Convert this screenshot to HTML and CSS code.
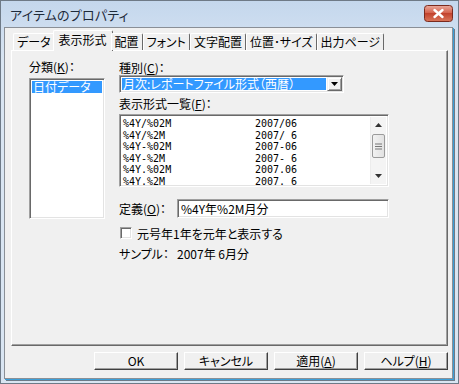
FILE: index.html
```html
<!DOCTYPE html>
<html lang="ja">
<head>
  <meta charset="UTF-8">
  <title>アイテムのプロパティ</title>
  <link rel="stylesheet" href="styles.css">
</head>
<body>
  <div class="window">
    <div class="titlebar">
      <span class="title">アイテムのプロパティ</span>
      <span class="close-btn">
        <svg width="29" height="17" viewBox="0 0 29 17">
          <defs>
            <linearGradient id="cg" x1="0" y1="0" x2="0" y2="1">
              <stop offset="0" stop-color="#eaaa9d"/>
              <stop offset="0.45" stop-color="#d5644f"/>
              <stop offset="0.5" stop-color="#c2432e"/>
              <stop offset="1" stop-color="#da775b"/>
            </linearGradient>
          </defs>
          <rect x="0.5" y="0.5" width="28" height="16" rx="3" fill="url(#cg)" stroke="#7a2a1e"/>
          <path d="M10.5 5 L18.5 12 M18.5 5 L10.5 12" stroke="#fff" stroke-width="2.4" stroke-linecap="round"/>
        </svg>
      </span>
    </div>
    <div class="client">
      <div class="tabs">
        <div class="tab">データ</div>
        <div class="tab active">表示形式</div>
        <div class="tab">配置</div>
        <div class="tab">フォント</div>
        <div class="tab">文字配置</div>
        <div class="tab">位置･サイズ</div>
        <div class="tab">出力ページ</div>
      </div>
      <div class="panel">
        <div class="col-left">
          <div class="label">分類(<u>K</u>)：</div>
          <div class="listbox category">
            <div class="item selected">日付データ</div>
          </div>
        </div>
        <div class="col-right">
          <div class="label">種別(<u>C</u>)：</div>
          <div class="combo">
            <div class="combo-value"><span>月次:レポートファイル形式（西暦）</span></div>
            <div class="combo-btn">
              <svg width="7" height="4" viewBox="0 0 7 4"><path d="M0 0 H7 L3.5 4 Z" fill="#000"/></svg>
            </div>
          </div>
          <div class="label list-label">表示形式一覧(<u>F</u>)：</div>
          <div class="listbox formats">
            <div class="rows">
              <div class="row"><span class="fmt">%4Y/%02M</span><span>2007/06</span></div>
              <div class="row"><span class="fmt">%4Y/%2M</span><span>2007/ 6</span></div>
              <div class="row"><span class="fmt">%4Y-%02M</span><span>2007-06</span></div>
              <div class="row"><span class="fmt">%4Y-%2M</span><span>2007- 6</span></div>
              <div class="row"><span class="fmt">%4Y.%02M</span><span>2007.06</span></div>
              <div class="row"><span class="fmt">%4Y.%2M</span><span>2007. 6</span></div>
            </div>
            <div class="scrollbar">
              <div class="arrow">
                <svg width="7" height="4" viewBox="0 0 7 4"><path d="M0 4 H7 L3.5 0 Z" fill="#333"/></svg>
              </div>
              <div class="track">
                <div class="thumb">
                  <svg width="7" height="7" viewBox="0 0 7 7"><path d="M0 1 H7 M0 3.5 H7 M0 6 H7" stroke="#777" stroke-width="1"/></svg>
                </div>
              </div>
              <div class="arrow">
                <svg width="7" height="4" viewBox="0 0 7 4"><path d="M0 0 H7 L3.5 4 Z" fill="#333"/></svg>
              </div>
            </div>
          </div>
          <div class="def-row">
            <span class="def-label">定義(<u>O</u>)：</span>
            <div class="textbox">%4Y年%2M月分</div>
          </div>
          <div class="check-row">
            <span class="checkbox"></span>
            <span>元号年1年を元年と表示する</span>
          </div>
          <div class="sample-row">
            <span class="def-label">サンプル：</span>
            <span>2007年 6月分</span>
          </div>
        </div>
      </div>
      <div class="buttons">
        <button class="btn">OK</button>
        <button class="btn">キャンセル</button>
        <button class="btn">適用(<u>A</u>)</button>
        <button class="btn">ヘルプ(<u>H</u>)</button>
      </div>
    </div>
  </div>
</body>
</html>
```

FILE: styles.css
```css
* {
  box-sizing: border-box;
}
body {
  margin: 0;
  padding: 0;
  background: #fff;
  font-family: "Noto Sans CJK JP", "Liberation Sans", sans-serif;
  font-size: 12px;
  font-feature-settings: "palt";
  color: #000;
}
u {
  text-decoration: underline;
  text-underline-offset: 1px;
}
.window {
  width: 459px;
  height: 384px;
  border: 1px solid #6e7a87;
  background: linear-gradient(#c4d7ed, #d9e5f2 60px, #d9e5f2);
  display: flex;
  flex-direction: column;
}
.titlebar {
  height: 26px;
  display: flex;
  align-items: center;
  justify-content: space-between;
  padding: 0 5px 0 9px;
}
.title {
  font-size: 13px;
  color: #1e2a3a;
  letter-spacing: 0.2px;
}
.close-btn {
  display: flex;
  margin-top: -2px;
}
.client {
  flex: 1;
  margin: 0 5px 4px 3px;
  background: #f0f0f0;
  border: 1px solid #8a8f96;
  box-shadow: 1px 1px 0 #3b9fd9, 2px 2px 0 #6e7a87;
  display: flex;
  flex-direction: column;
}
.tabs {
  display: flex;
  align-items: flex-end;
  height: 21px;
  margin: 1px 0 0 8px;
  position: relative;
  z-index: 1;
}
.tab {
  height: 17px;
  line-height: 15px;
  padding: 0 3px;
  border-top: 1px solid #fff;
  border-left: 1px solid #fff;
  border-right: 1px solid #696969;
  border-radius: 2px 2px 0 0;
  white-space: nowrap;
  background: #f0f0f0;
}
.tab.active {
  height: 21px;
  line-height: 18px;
  margin: 0 -2px -1px -2px;
  padding: 0 5px;
}
.panel {
  margin: 0 4px 0 6px;
  height: 296px;
  border-top: 1px solid #fff;
  border-left: 1px solid #fff;
  border-right: 1px solid #696969;
  border-bottom: 1px solid #696969;
  box-shadow: inset -1px -1px 0 #a0a0a0;
  display: flex;
  gap: 14px;
  padding: 9px 0 0 17px;
}
.label {
  height: 14px;
  line-height: 14px;
  white-space: nowrap;
}
.col-left {
  width: 76px;
}
.listbox {
  background: #fff;
  border-top: 1px solid #a0a0a0;
  border-left: 1px solid #a0a0a0;
  border-right: 1px solid #fff;
  border-bottom: 1px solid #fff;
  box-shadow: inset 1px 1px 0 #696969, inset -1px -1px 0 #e3e3e3;
}
.category {
  margin-top: 4px;
  height: 141px;
  padding: 2px;
}
.item {
  height: 12px;
  line-height: 12px;
  padding-left: 1px;
}
.item.selected {
  background: #3399ff;
  color: #fff;
}
.col-right {
  width: 270px;
}
.col-right > .label:first-child {
  margin-top: 1px;
}
.combo {
  width: 225px;
  height: 18px;
  margin-top: 0;
  display: flex;
  padding: 2px;
  background: #fff;
  border-top: 1px solid #a0a0a0;
  border-left: 1px solid #a0a0a0;
  border-right: 1px solid #fff;
  border-bottom: 1px solid #fff;
  box-shadow: inset 1px 1px 0 #696969, inset -1px -1px 0 #e3e3e3;
}
.combo-value {
  flex: 1;
  padding-right: 1px;
}
.combo-value span {
  display: block;
  height: 12px;
  line-height: 12px;
  background: #3399ff;
  color: #fff;
  padding-left: 1px;
  white-space: nowrap;
}
.combo-btn {
  width: 15px;
  margin: -1px -1px -1px 0;
  background: #f0f0f0;
  border-top: 1px solid #f0f0f0;
  border-left: 1px solid #f0f0f0;
  border-right: 1px solid #696969;
  border-bottom: 1px solid #696969;
  box-shadow: inset 1px 1px 0 #fff, inset -1px -1px 0 #a0a0a0;
  display: flex;
  align-items: center;
  justify-content: center;
}
.list-label {
  margin-top: 4px;
}
.formats {
  margin-top: 3px;
  height: 73px;
  display: flex;
  padding: 2px;
}
.rows {
  flex: 1;
  padding: 1px 0 0 1px;
  font-family: "DejaVu Sans Mono", "Liberation Mono", monospace;
  font-size: 10px;
}
.row {
  display: flex;
  height: 11.5px;
  line-height: 11px;
  white-space: pre;
}
.fmt {
  width: 132px;
}
.scrollbar {
  width: 16px;
  background: #f4f4f4;
  display: flex;
  flex-direction: column;
  border-left: 1px solid #ececec;
}
.arrow {
  height: 16px;
  display: flex;
  align-items: center;
  justify-content: center;
}
.track {
  flex: 1;
  padding-top: 1px;
}
.thumb {
  height: 24px;
  margin: 0 1px;
  border: 1px solid #9b9b9b;
  border-radius: 2px;
  background: linear-gradient(90deg, #f2f2f2, #e2e2e2);
  display: flex;
  align-items: center;
  justify-content: center;
}
.def-row {
  display: flex;
  align-items: center;
  margin-top: 12px;
  white-space: nowrap;
}
.def-label {
  width: 58px;
}
.textbox {
  width: 212px;
  height: 19px;
  line-height: 15px;
  padding: 1px 3px;
  background: #fff;
  border-top: 1px solid #a0a0a0;
  border-left: 1px solid #a0a0a0;
  border-right: 1px solid #fff;
  border-bottom: 1px solid #fff;
  box-shadow: inset 1px 1px 0 #696969, inset -1px -1px 0 #e3e3e3;
}
.check-row {
  display: flex;
  align-items: center;
  gap: 5px;
  margin-top: 8px;
  height: 14px;
  white-space: nowrap;
}
.checkbox {
  width: 12px;
  height: 12px;
  margin-left: 1px;
  background: #fff;
  border-top: 1px solid #a0a0a0;
  border-left: 1px solid #a0a0a0;
  border-right: 1px solid #fff;
  border-bottom: 1px solid #fff;
  box-shadow: inset 1px 1px 0 #696969, inset -1px -1px 0 #e3e3e3;
}
.sample-row {
  display: flex;
  margin-top: 7px;
  height: 14px;
  line-height: 14px;
  white-space: nowrap;
}
.buttons {
  display: flex;
  justify-content: flex-end;
  gap: 6px;
  margin: 6px 4px 0 0;
}
.btn {
  width: 84px;
  height: 18px;
  padding: 0;
  font-family: inherit;
  font-size: 12px;
  font-feature-settings: "palt";
  line-height: 14px;
  color: #000;
  background: #f0f0f0;
  border-top: 1px solid #fff;
  border-left: 1px solid #fff;
  border-right: 1px solid #404040;
  border-bottom: 1px solid #404040;
  box-shadow: inset -1px -1px 0 #a0a0a0;
  border-radius: 0;
}
```
